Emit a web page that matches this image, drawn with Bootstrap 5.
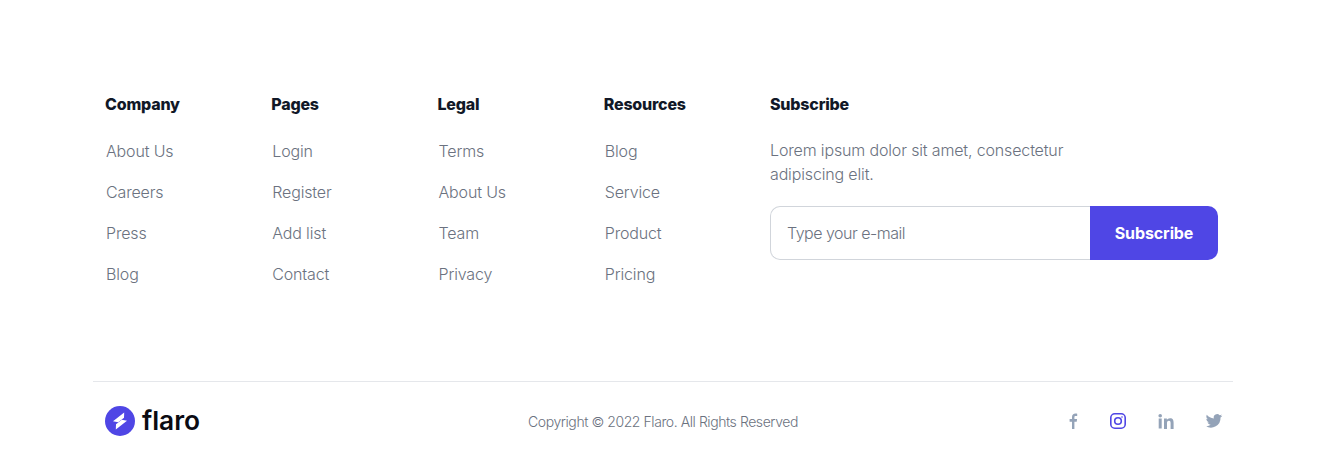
<!DOCTYPE html>
<html lang="en">
<head>
  <meta charset="UTF-8">
  <title>Flaro footer</title>
  <meta name="viewport" content="width=device-width, initial-scale=1">
  <link href="https://cdn.jsdelivr.net/npm/bootstrap@5.3.0/dist/css/bootstrap.min.css" rel="stylesheet">
  <style>
    body { font-family: "Inter", "Liberation Sans", sans-serif; background: #fff; }
    .footer-top { padding-top: 92px; height: 381px; }
    .foot-col { width: 166.25px; }
    .foot-title { font-size: 16px; line-height: 24px; font-weight: 800; color: #111827; margin-bottom: 23px; letter-spacing: -0.2px; }
    .foot-links { list-style: none; padding: 0 0 0 1px; margin: 0; }
    .foot-links li { margin-bottom: 17px; line-height: 24px; }
    .foot-links a { font-size: 16px; font-weight: 300; color: #6b7280; text-decoration: none; letter-spacing: -0.15px; }
    .foot-text { font-size: 16px; line-height: 24px; font-weight: 300; color: #6b7280; margin-top: -1px; margin-bottom: 20px; width: 320px; letter-spacing: -0.15px; }
    .sub-form { width: 448px; height: 54px; }
    .sub-input { width: 320px; border: 1px solid #d1d5db; border-right: 0; border-radius: 10px 0 0 10px; padding: 0 16px; font-size: 16px; font-weight: 300; color: #6b7280; outline: 0; letter-spacing: -0.5px; }
    .sub-input::placeholder { color: #6b7280; opacity: 1; }
    .sub-btn { width: 128px; border: 0; background: #4f46e5; color: #fff; font-weight: 700; font-size: 16px; letter-spacing: -0.1px; border-radius: 0 10px 10px 0; }
    .footer-bottom { border-top: 1px solid #e5e7eb; height: 79px; padding: 0 12px; }
    .logo-word { font-size: 26.3px; font-weight: 600; color: #0b0b12; line-height: 1; margin-left: -1px; }
    .copy-text { font-size: 14px; font-weight: 300; color: #6b7280; letter-spacing: -0.43px; padding-top: 1px !important; }
    .social-icons { gap: 30px; margin-left: 2px; margin-right: -2px; }
    .social-icons svg { display: block; }
    .social-icons svg:first-child { margin-right: -3px; }
  </style>
</head>
<body>
  <footer class="container">
    <div class="row footer-top">
      <div class="col-7 d-flex">
        <div class="foot-col flex-shrink-0">
          <h6 class="foot-title">Company</h6>
          <ul class="foot-links">
            <li><a href="#">About Us</a></li>
            <li><a href="#">Careers</a></li>
            <li><a href="#">Press</a></li>
            <li><a href="#">Blog</a></li>
          </ul>
        </div>
        <div class="foot-col flex-shrink-0">
          <h6 class="foot-title">Pages</h6>
          <ul class="foot-links">
            <li><a href="#">Login</a></li>
            <li><a href="#">Register</a></li>
            <li><a href="#">Add list</a></li>
            <li><a href="#">Contact</a></li>
          </ul>
        </div>
        <div class="foot-col flex-shrink-0">
          <h6 class="foot-title">Legal</h6>
          <ul class="foot-links">
            <li><a href="#">Terms</a></li>
            <li><a href="#">About Us</a></li>
            <li><a href="#">Team</a></li>
            <li><a href="#">Privacy</a></li>
          </ul>
        </div>
        <div class="foot-col flex-shrink-0">
          <h6 class="foot-title">Resources</h6>
          <ul class="foot-links">
            <li><a href="#">Blog</a></li>
            <li><a href="#">Service</a></li>
            <li><a href="#">Product</a></li>
            <li><a href="#">Pricing</a></li>
          </ul>
        </div>
      </div>
      <div class="col-5">
        <h6 class="foot-title">Subscribe</h6>
        <p class="foot-text">Lorem ipsum dolor sit amet, consectetur adipiscing elit.</p>
        <form class="d-flex sub-form">
          <input class="sub-input" type="text" placeholder="Type your e-mail">
          <button class="sub-btn" type="button">Subscribe</button>
        </form>
      </div>
    </div>

    <div class="row footer-bottom align-items-center">
      <div class="col-4 p-0 d-flex align-items-center gap-2">
        <svg width="30" height="30" viewBox="0 0 30 30" aria-label="flaro logo">
          <circle cx="15" cy="15" r="15" fill="#4f46e5"/>
          <path d="M19.200 6.500 8 15.300 13.200 16.300 19 11.800z" fill="#fff"/>
          <path d="M10.800 23.500 22 14.700 16.800 13.700 11 18.200z" fill="#fff"/>
        </svg>
        <span class="logo-word">flaro</span>
      </div>
      <div class="col-4 p-0 text-center copy-text">Copyright © 2022 Flaro. All Rights Reserved</div>
      <div class="col-4 p-0 d-flex justify-content-end align-items-center social-icons">
        <svg width="18" height="18" viewBox="0 0 18 18"><path d="M10.400 17V9.800h2.300l.4-2.700h-2.700V5.400c0-.8.300-1.300 1.400-1.300h1.400V1.700C12.900 1.600 12.200 1.500 11.500 1.500 9.400 1.500 8 2.800 8 5.100v2H5.600v2.700H8V17z" fill="#94a3b8"/></svg>
        <svg width="18" height="18" viewBox="0 0 18 18" fill="none" stroke="#4f46e5" stroke-width="1.600"><rect x="1.800" y="1.800" width="14.400" height="14.400" rx="4"/><circle cx="9" cy="9" r="3.300"/><circle cx="13" cy="5" r=".8" fill="#4f46e5" stroke="none"/></svg>
        <svg width="18" height="18" viewBox="0 0 18 18" fill="#94a3b8"><circle cx="3.200" cy="3.800" r="1.800"/><rect x="1.700" y="6.500" width="3" height="10"/><path d="M7 6.500h2.900v1.400c.5-.9 1.600-1.700 3.100-1.700 3 0 3.600 1.900 3.600 4.500v6.300h-3v-5.600c0-1.300-.1-2.700-1.700-2.700s-1.900 1.200-1.900 2.600v5.700H7z"/></svg>
        <svg width="18" height="18" viewBox="0 0 24 24" fill="#94a3b8"><path d="M23 5c-.8.400-1.700.6-2.600.7.900-.6 1.600-1.400 2-2.500-.9.500-1.900.9-2.900 1.100A4.500 4.500 0 0 0 11.800 8.500C8 8.300 4.600 6.500 2.400 3.700c-1.200 2.100-.6 4.700 1.400 6-.7 0-1.400-.2-2-.6 0 2.200 1.500 4.100 3.600 4.600-.7.200-1.400.2-2 .1.600 1.800 2.300 3.100 4.200 3.100A9 9 0 0 1 1 18.800 12.800 12.800 0 0 0 20.700 7.400c.9-.6 1.700-1.400 2.300-2.400z"/></svg>
      </div>
    </div>
  </footer>
  <script src="https://cdn.jsdelivr.net/npm/bootstrap@5.3.0/dist/js/bootstrap.bundle.min.js"></script>
</body>
</html>
